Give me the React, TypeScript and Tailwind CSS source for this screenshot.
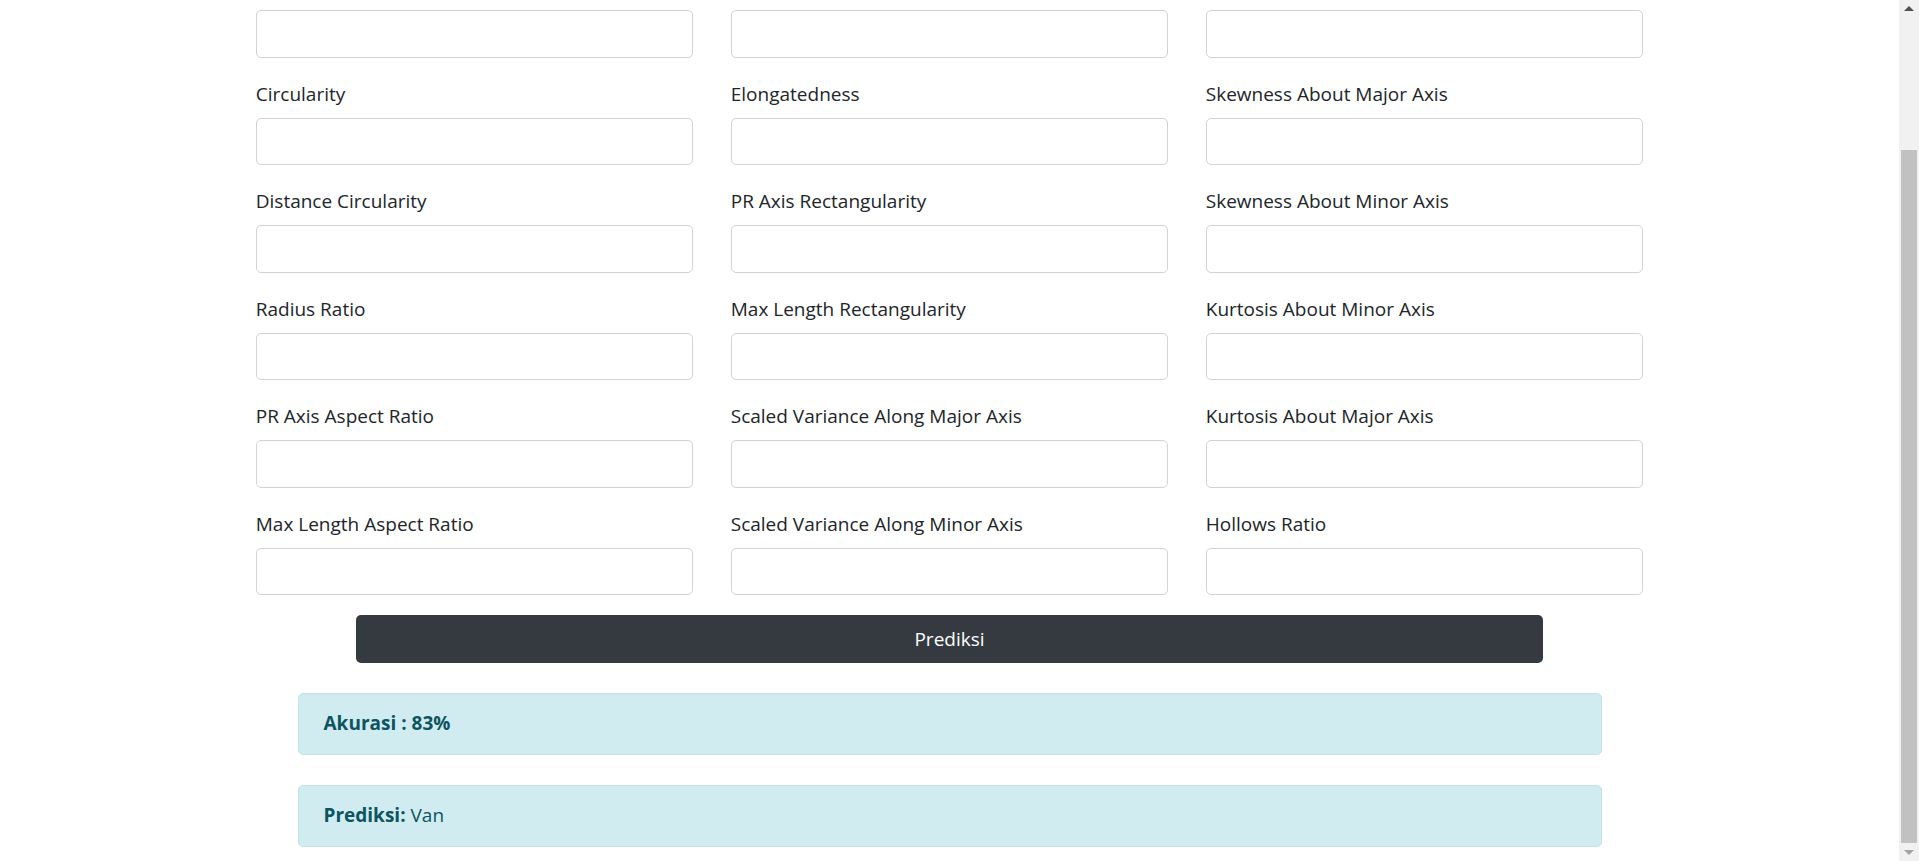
const rows: string[][] = [
  ['', '', ''],
  ['Circularity', 'Elongatedness', 'Skewness About Major Axis'],
  ['Distance Circularity', 'PR Axis Rectangularity', 'Skewness About Minor Axis'],
  ['Radius Ratio', 'Max Length Rectangularity', 'Kurtosis About Minor Axis'],
  ['PR Axis Aspect Ratio', 'Scaled Variance Along Major Axis', 'Kurtosis About Major Axis'],
  ['Max Length Aspect Ratio', 'Scaled Variance Along Minor Axis', 'Hollows Ratio'],
];

function Field({ label }: { label: string }) {
  return (
    <div className="flex flex-col">
      {label && <label className="mb-[10px] h-[30px] leading-[33px] text-[#212529]">{label}</label>}
      <input
        type="text"
        className="h-[47.5px] w-full rounded-[5px] border border-[#ced4da] bg-white px-[15px] outline-none"
      />
    </div>
  );
}

function Scrollbar() {
  return (
    <div className="flex h-full w-[20px] shrink-0 flex-col bg-[#f1f1f1]">
      <div className="flex h-[17px] items-center justify-center">
        <div className="h-0 w-0 border-x-[5px] border-b-[5px] border-x-transparent border-b-[#505050]" />
      </div>
      <div className="h-[133px]" />
      <div className="mx-[2px] h-[693px] bg-[#c1c1c1]" />
      <div className="flex flex-1 items-center justify-center">
        <div className="h-0 w-0 border-x-[5px] border-t-[5px] border-x-transparent border-t-[#a3a3a3]" />
      </div>
    </div>
  );
}

export default function App() {
  return (
    <div
      className="flex h-[861px] w-full overflow-hidden bg-white text-[19px]"
      style={{ fontFamily: '"Segoe UI", "Open Sans", "Noto Sans", sans-serif' }}
    >
      <div className="flex flex-1 flex-col items-center pt-[10px]">
        <div className="flex w-[1387.5px] flex-col gap-[20px]">
          {rows.map((row, i) => (
            <div key={i} className="grid grid-cols-3 gap-x-[37.5px]">
              {row.map((label, j) => (
                <Field key={j} label={label} />
              ))}
            </div>
          ))}
        </div>
        <button className="mt-[20px] h-[47.5px] w-[1187px] rounded-[5px] bg-[#343a40] text-white">
          Prediksi
        </button>
        <div className="mt-[30px] flex h-[62px] w-[1304px] items-center rounded-[5px] border border-[#bee5eb] bg-[#d1ecf1] px-[25px] text-[#0c5460]">
          <b>Akurasi : 83%</b>
        </div>
        <div className="mt-[30px] flex h-[62px] w-[1304px] items-center rounded-[5px] border border-[#bee5eb] bg-[#d1ecf1] px-[25px] text-[#0c5460]">
          <span>
            <b>Prediksi:</b> Van
          </span>
        </div>
      </div>
      <Scrollbar />
    </div>
  );
}
